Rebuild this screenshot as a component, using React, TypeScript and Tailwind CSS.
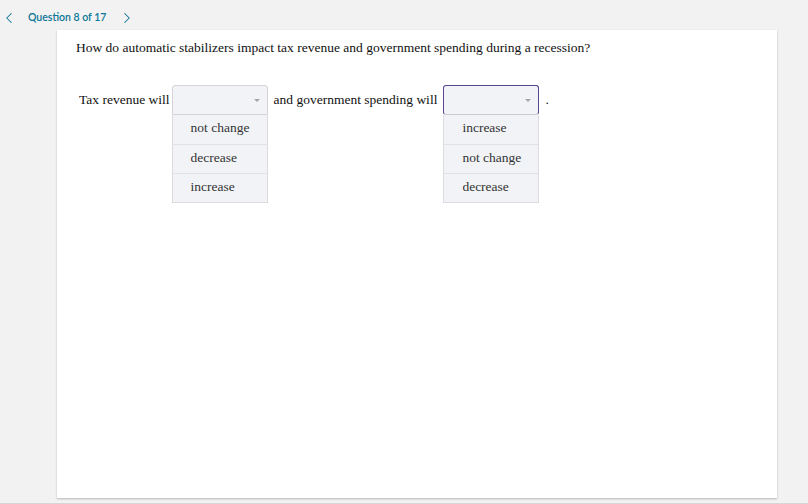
import { ChevronLeft, ChevronRight } from "lucide-react";

const serif = { fontFamily: '"Liberation Serif", "Times New Roman", serif' };

function Dropdown({ options, active }: { options: string[]; active?: boolean }) {
  return (
    <div className="relative w-[96px] h-[30px]">
      <div
        className={`h-[30px] rounded-t-[3px] border bg-[#f2f3f7] flex items-center justify-end pr-[7px] ${
          active ? "border-[#5b4591] border-b-[#c9c9cf] rounded-[3px]" : "border-[#d3d3d8]"
        }`}
      >
        <span className="w-0 h-0 border-x-[3px] border-x-transparent border-t-[3px] border-t-[#a5a5a8]" />
      </div>
      <ul className="absolute left-0 top-[30px] w-[96px] border-x border-b border-[#dcdce0] bg-[#f2f3f7]">
        {options.map((opt, i) => (
          <li
            key={opt}
            className={`h-[29px] pl-[18px] pb-[3px] flex items-center text-[13.5px] text-[#333] ${
              i > 0 ? "border-t border-[#e2e2e6]" : ""
            }`}
          >
            {opt}
          </li>
        ))}
      </ul>
    </div>
  );
}

export default function App() {
  return (
    <div className="w-[808px] h-[504px] bg-[#f2f2f2] relative overflow-hidden border-b border-[#d6d6d6]">
      <div
        className="h-[30px] pt-[5px] flex items-center text-[#0a7596] text-[10.5px] font-semibold"
        style={{ fontFamily: 'Lato, "Open Sans", sans-serif' }}
      >
        <ChevronLeft size={18} strokeWidth={1.4} className="ml-[0px]" />
        <span className="ml-[10px]">Question 8 of 17</span>
        <ChevronRight size={18} strokeWidth={1.4} className="ml-[12px]" />
      </div>
      <div className="ml-[57px] w-[720px] h-[468px] bg-white shadow-[0_1px_2px_rgba(0,0,0,0.25)]" style={serif}>
        <p className="pt-[8px] pl-[19px] text-[13.5px] text-[#111]">
          How do automatic stabilizers impact tax revenue and government spending during a recession?
        </p>
        <div className="mt-[27px] pl-[22px] flex items-center text-[13.5px] text-[#111]">
          <span>Tax revenue will</span>
          <span className="ml-[2px]">
            <Dropdown options={["not change", "decrease", "increase"]} />
          </span>
          <span className="ml-[6px]">and government spending will</span>
          <span className="ml-[6px]">
            <Dropdown options={["increase", "not change", "decrease"]} active />
          </span>
          <span className="ml-[6px]">.</span>
        </div>
      </div>
    </div>
  );
}
